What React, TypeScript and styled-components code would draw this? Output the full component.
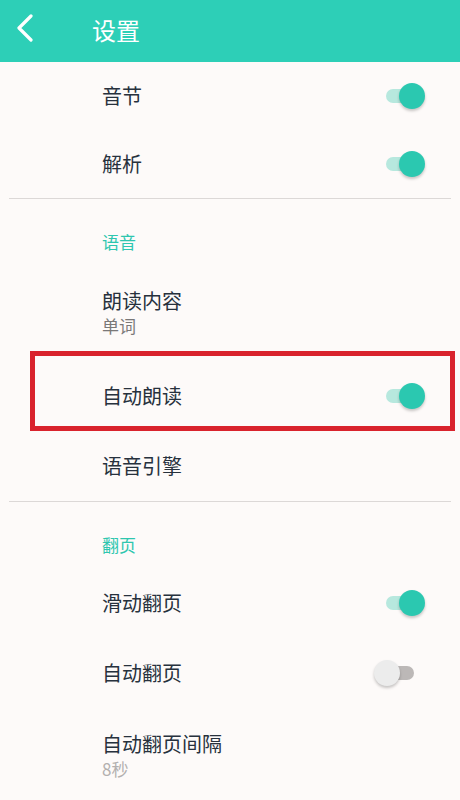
import React from "react";
import styled, { createGlobalStyle } from "styled-components";

const GlobalStyle = createGlobalStyle`
  html, body {
    margin: 0;
    padding: 0;
    background: #fdfaf9;
  }
  body {
    font-family: "Noto Sans CJK SC", "Noto Sans", sans-serif;
  }
`;

interface ISetting {
  title: string;
  sub?: string;
  subLight?: boolean;
  toggle?: boolean;
  on?: boolean;
  marked?: boolean;
}

interface ISection {
  label?: string;
  compact?: boolean;
  items: ISetting[];
}

const sections: ISection[] = [
  {
    compact: true,
    items: [
      { title: "音节", toggle: true, on: true },
      { title: "解析", toggle: true, on: true },
    ],
  },
  {
    label: "语音",
    items: [
      { title: "朗读内容", sub: "单词" },
      { title: "自动朗读", toggle: true, on: true, marked: true },
      { title: "语音引擎" },
    ],
  },
  {
    label: "翻页",
    items: [
      { title: "滑动翻页", toggle: true, on: true },
      { title: "自动翻页", toggle: true, on: false },
      { title: "自动翻页间隔", sub: "8秒", subLight: true },
    ],
  },
];

const App = () => {
  return (
    <>
      <GlobalStyle />
      <Page>
        <TopBar>
          <BackButton>
            <svg width="20" height="30" viewBox="0 0 20 30">
              <path
                d="M15 2 L3 14 L15 26"
                fill="none"
                stroke="#fff"
                strokeWidth="3.2"
                strokeLinecap="round"
                strokeLinejoin="round"
              />
            </svg>
          </BackButton>
          <Title>设置</Title>
        </TopBar>
        {sections.map((section, i) => (
          <React.Fragment key={i}>
            {i > 0 && <Divider />}
            {section.label && <SectionLabel>{section.label}</SectionLabel>}
            {section.items.map((item) => (
              <Row key={item.title} $tall={!!item.sub} $compact={!!section.compact}>
                <TextBlock>
                  <RowTitle>{item.title}</RowTitle>
                  {item.sub && <RowSub $light={item.subLight}>{item.sub}</RowSub>}
                </TextBlock>
                {item.toggle && (
                  <Switch $on={!!item.on}>
                    <Knob $on={!!item.on} />
                  </Switch>
                )}
                {item.marked && <Marker />}
              </Row>
            ))}
          </React.Fragment>
        ))}
      </Page>
    </>
  );
};

export default App;

const Page = styled.div`
  width: 460px;
  min-height: 800px;
  background: #fdfaf9;
  display: flex;
  flex-direction: column;
`;

const TopBar = styled.div`
  height: 62px;
  background: #2dcfb7;
  display: flex;
  align-items: center;
  padding-left: 16px;
  box-sizing: border-box;
`;

const BackButton = styled.div`
  width: 20px;
  height: 30px;
  display: flex;
  align-items: center;
  margin-right: 56px;
  margin-top: -4px;
`;

const Title = styled.h1`
  margin: 0;
  margin-top: -3px;
  font-size: 24px;
  font-weight: 400;
  color: #ffffff;
  line-height: 1;
`;

const Divider = styled.div`
  height: 1px;
  margin: 0 9px;
  background: #dcd8d7;
`;

const SectionLabel = styled.div`
  height: 66px;
  box-sizing: border-box;
  padding: 32px 0 0 102px;
  font-size: 17px;
  line-height: 22px;
  color: #2ec6af;
`;

const Row = styled.div<{ $tall: boolean; $compact: boolean }>`
  position: relative;
  height: ${(p) => (p.$tall ? "96px" : p.$compact ? "68px" : "70px")};
  display: flex;
  align-items: center;
  justify-content: space-between;
  padding: 0 34px 0 102px;
  box-sizing: border-box;
`;

const TextBlock = styled.div`
  display: flex;
  flex-direction: column;
  gap: 2px;
`;

const RowTitle = styled.div`
  font-size: 20px;
  line-height: 24px;
  color: #27313d;
`;

const RowSub = styled.div<{ $light?: boolean }>`
  font-size: 17px;
  line-height: 22px;
  color: ${(p) => (p.$light ? "#b3b0af" : "#7a7878")};
`;

const Switch = styled.div<{ $on: boolean }>`
  position: relative;
  width: 34px;
  height: 14px;
  border-radius: 7px;
  margin-right: ${(p) => (p.$on ? "6px" : "12px")};
  background: ${(p) => (p.$on ? "#b7e8de" : "#bcb8b7")};
`;

const Knob = styled.div<{ $on: boolean }>`
  position: absolute;
  top: -6px;
  left: ${(p) => (p.$on ? "13px" : "-6px")};
  width: 26px;
  height: 26px;
  border-radius: 50%;
  background: ${(p) => (p.$on ? "#2bc8b0" : "#ececec")};
  box-shadow: 0 2px 3px rgba(0, 0, 0, 0.22);
`;

const Marker = styled.div`
  position: absolute;
  top: -10px;
  bottom: 0;
  left: 30px;
  right: 5px;
  border: 5px solid #d9232d;
  pointer-events: none;
`;
